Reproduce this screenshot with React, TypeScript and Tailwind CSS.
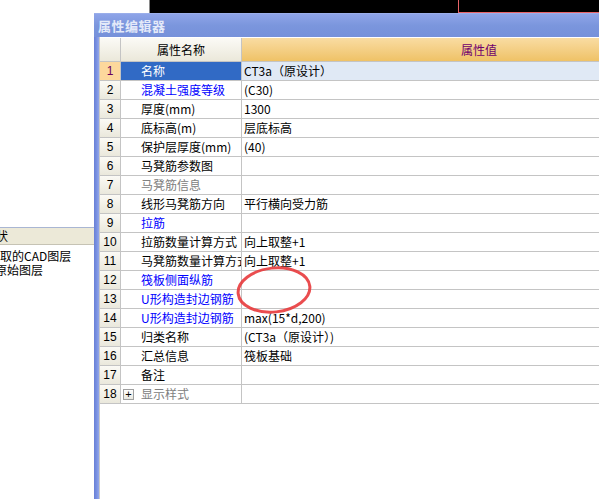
import React from "react";

type Row = { n: number; name: string; value: string; nameColor?: string; selected?: boolean; plus?: boolean };

const rows: Row[] = [
  { n: 1, name: "名称", value: "CT3a（原设计）", selected: true },
  { n: 2, name: "混凝土强度等级", value: "(C30)", nameColor: "text-[#0000ff]" },
  { n: 3, name: "厚度(mm)", value: "1300" },
  { n: 4, name: "底标高(m)", value: "层底标高" },
  { n: 5, name: "保护层厚度(mm)", value: "(40)" },
  { n: 6, name: "马凳筋参数图", value: "" },
  { n: 7, name: "马凳筋信息", value: "", nameColor: "text-[#808080]" },
  { n: 8, name: "线形马凳筋方向", value: "平行横向受力筋" },
  { n: 9, name: "拉筋", value: "", nameColor: "text-[#0000ff]" },
  { n: 10, name: "拉筋数量计算方式", value: "向上取整+1" },
  { n: 11, name: "马凳筋数量计算方式", value: "向上取整+1" },
  { n: 12, name: "筏板侧面纵筋", value: "", nameColor: "text-[#0000ff]" },
  { n: 13, name: "U形构造封边钢筋", value: "", nameColor: "text-[#0000ff]" },
  { n: 14, name: "U形构造封边钢筋", value: "max(15*d,200)", nameColor: "text-[#0000ff]" },
  { n: 15, name: "归类名称", value: "(CT3a（原设计）)" },
  { n: 16, name: "汇总信息", value: "筏板基础" },
  { n: 17, name: "备注", value: "" },
  { n: 18, name: "显示样式", value: "", nameColor: "text-[#808080]", plus: true },
];

export default function App() {
  return (
    <div className="relative w-[599px] h-[499px] bg-white overflow-hidden flex flex-col text-[12px] leading-none text-black font-['Noto_Sans_CJK_SC',_'Noto_Sans',_sans-serif]">
      {/* top background strip */}
      <div className="h-[13px] flex shrink-0">
        <div className="w-[149px] bg-white" />
        <div className="w-px bg-[#8a8a8a]" />
        <div className="flex-1 bg-black flex">
          <div className="w-[308px]" />
          <div className="flex-1 border-l border-b border-[#e86468]" />
        </div>
      </div>

      <div className="flex-1 flex min-h-0">
        {/* left panel (behind window) */}
        <div className="w-[94px] shrink-0 flex flex-col overflow-hidden">
          <div className="h-[214px] shrink-0" />
          <div className="h-px bg-[#a9b6d3]" />
          <div className="h-[17px] bg-[#ece9d8] border-b border-[#c6c3b4] flex items-center overflow-hidden">
            <span className="-ml-[4px] whitespace-nowrap">状</span>
          </div>
          <div className="h-[4px]" />
          <div className="h-[14px] flex items-center whitespace-nowrap">取的CAD图层</div>
          <div className="h-[14px] flex items-center whitespace-nowrap -ml-[5px]">原始图层</div>
        </div>

        {/* property editor window */}
        <div className="flex-1 flex flex-col min-w-0">
          <div className="h-[24px] shrink-0 bg-gradient-to-b from-[#8ea4e8] via-[#7b96dd] to-[#7691da] border-t border-[#9aaeea] flex items-center pl-[4px]">
            <span className="text-[13px] font-bold text-[#e4eaf9] tracking-[0.5px]">属性编辑器</span>
          </div>
          <div className="flex-1 flex min-h-0">
            <div className="w-[5px] shrink-0 bg-gradient-to-r from-[#6a80d6] via-[#7890e0] to-[#93a6ec]" />
            <div className="w-px shrink-0 bg-[#c8c8c8]" />
            <div className="flex-1 flex flex-col bg-white min-w-0">
              <div className="h-px bg-white" />
              {/* header */}
              <div className="h-[24px] flex border-b border-[#c4c4c4] shrink-0">
                <div className="w-[21px] bg-gradient-to-b from-[#fbfaf6] to-[#ebe8da] border-r border-[#c4c4c4]" />
                <div className="w-[121px] bg-gradient-to-b from-[#fbfaf6] to-[#ebe8da] border-r border-[#c4c4c4] flex items-center justify-center">
                  属性名称
                </div>
                <div className="flex-1 bg-gradient-to-b from-[#f9dca2] to-[#efc266] flex items-center pl-[219px] text-[#70006e]">
                  属性值
                </div>
              </div>
              {rows.map((r) => (
                <div key={r.n} className="h-[19px] flex border-b border-[#c4c4c4] shrink-0">
                  <div
                    className={
                      r.selected
                        ? "w-[21px] bg-[#fdd89c] border-r border-[#c4c4c4] flex items-center justify-center text-[#6a0060] font-['Liberation_Sans',_sans-serif] text-[12px]"
                        : "w-[21px] bg-gradient-to-b from-[#fbfaf5] to-[#eae8dc] border-r border-[#c4c4c4] flex items-center justify-center font-['Liberation_Sans',_sans-serif] text-[12px]"
                    }
                  >
                    {r.n}
                  </div>
                  <div
                    className={
                      (r.selected ? "bg-[#316ac5] text-white " : (r.nameColor ?? "") + " ") +
                      "w-[121px] border-r border-[#c4c4c4] flex items-center overflow-hidden whitespace-nowrap " +
                      (r.plus ? "pl-[2px]" : "pl-[20px]")
                    }
                  >
                    {r.plus && (
                      <span className="w-[11px] h-[11px] mr-[7px] border border-[#a0a0a0] bg-gradient-to-b from-white to-[#e8e8e0] flex items-center justify-center text-black text-[11px] leading-none font-['Liberation_Sans',_sans-serif]">
                        +
                      </span>
                    )}
                    {r.name}
                  </div>
                  <div
                    className={
                      (r.selected ? "bg-[#e0e9f5] " : "") +
                      "flex-1 flex items-center pl-[2px] overflow-hidden whitespace-nowrap"
                    }
                  >
                    {r.value}
                  </div>
                </div>
              ))}
              <div className="flex-1 bg-white" />
            </div>
          </div>
        </div>
      </div>

      {/* red annotation ellipse */}
      <svg className="absolute left-0 top-0 pointer-events-none" width="599" height="499">
        <ellipse cx="274" cy="290" rx="36" ry="22" fill="none" stroke="#e83a3c" strokeWidth="3" opacity="0.9" transform="rotate(-6 274 290)" />
      </svg>
    </div>
  );
}
